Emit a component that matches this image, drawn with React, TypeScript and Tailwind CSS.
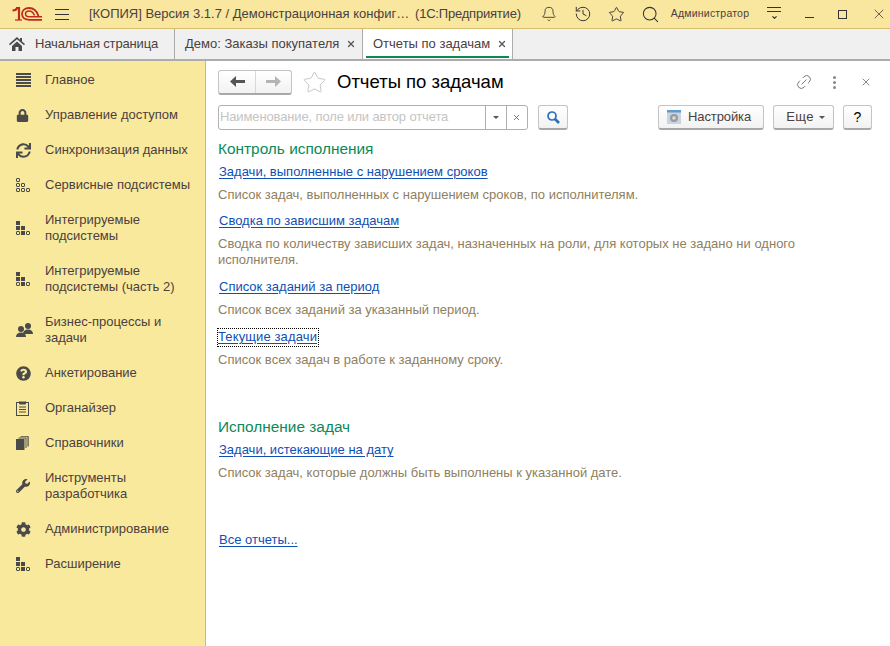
import type { ReactNode } from "react";
import { Bell, ChevronDown, History, Link2, Search, Star, X } from "lucide-react";
import { FaLock, FaQuestionCircle, FaWrench, FaCog, FaSync } from "react-icons/fa";

const Logo = () => (
  <svg width="30" height="14" viewBox="0 0 30 14" fill="none" stroke="#bf2a1c">
    <path d="M0.500 3.500C2.500 3.500 4.500 3 5 1H7V13" strokeWidth="2.200" />
    <path d="M3 13H10" strokeWidth="1.200" />
    <path d="M30 12.800H17.500C13 12.800 10 10.500 10 7C10 3.500 13 1 17 1C21.500 1 25 4.500 26.500 9" strokeWidth="1.800" />
    <path d="M30 9.800H18C15.500 9.800 13.500 8.800 13.500 7C13.500 5.200 15.200 4 17.200 4C19.500 4 21.500 6 22.500 8.500" strokeWidth="1.500" />
  </svg>
);

const Home = () => (
  <svg width="16" height="14" viewBox="0 0 16 14" fill="#4a4a4a">
    <path d="M8 0 0 7l1 1.200L8 2.200l7 6L16 7l-3-2.600V1h-2v1.700z" />
    <path d="M3 9 8 4.500 13 9v5H9.500V10h-3v4H3z" />
  </svg>
);

// stepped grid of squares; "f" cells are solid, "o" cells are outlined
const Tiles = ({ pattern }: { pattern: string }) => {
  const cells = [
    [0, 0],
    [0, 5],
    [5, 5],
    [0, 10],
    [5, 10],
    [10, 10],
  ];
  return (
    <svg width="15" height="14" viewBox="0 0 15 14" fill="none">
      {cells.map(([x, y], i) =>
        pattern[i] === "f" ? (
          <rect key={i} x={x} y={y} width="4" height="4" fill="#4a4a4a" />
        ) : (
          <rect key={i} x={x + 0.5} y={y + 0.5} width="3" height="3" stroke="#4a4a4a" rx="0.5" />
        ),
      )}
    </svg>
  );
};

const Lines = () => (
  <svg width="15" height="14" viewBox="0 0 15 14" fill="#4a4a4a">
    <rect y="0" width="15" height="2" />
    <rect y="3" width="15" height="2" />
    <rect y="6" width="15" height="2" />
    <rect y="9" width="15" height="2" />
    <rect y="12" width="15" height="2" />
  </svg>
);

const People = () => (
  <svg width="17" height="14" viewBox="0 0 17 14" fill="#4a4a4a">
    <circle cx="12" cy="3" r="3" />
    <path d="M7 11c0-3 2-4.500 5-4.500s5 1.500 5 4.500z" />
    <circle cx="5" cy="6" r="3" />
    <path d="M0 14c0-3 2-4.500 5-4.500s5 1.500 5 4.500z" />
  </svg>
);

const Clipboard = () => (
  <svg width="13" height="15" viewBox="0 0 13 15" fill="none" stroke="#4a4a4a">
    <rect x="0.500" y="1.500" width="12" height="13" />
    <path d="M3.500 0.500v2.500h6v-2.500" fill="#4a4a4a" />
    <path d="M3 6h7M3 8.500h7M3 11h7" />
  </svg>
);

const Pages = () => (
  <svg width="13" height="14" viewBox="0 0 13 14" fill="#4a4a4a">
    <rect x="0" y="3" width="8.500" height="11" />
    <path d="M9.500 2h1v10h-1zM2.500 1.500h8v1h-8zM11.500 0.500h1.200v10h-1.200zM4.500 0h8v0.800h-8z" />
  </svg>
);

const navItems: { label: ReactNode; icon: ReactNode }[] = [
  { label: "Главное", icon: <Lines /> },
  { label: "Управление доступом", icon: <FaLock size={13} color="#4a4a4a" /> },
  { label: "Синхронизация данных", icon: <FaSync size={15} color="#4a4a4a" /> },
  { label: "Сервисные подсистемы", icon: <Tiles pattern="oooooo" /> },
  { label: <>Интегрируемые<br />подсистемы</>, icon: <Tiles pattern="fffofo" /> },
  { label: <>Интегрируемые<br />подсистемы (часть 2)</>, icon: <Tiles pattern="fffofo" /> },
  { label: <>Бизнес-процессы и<br />задачи</>, icon: <People /> },
  { label: "Анкетирование", icon: <FaQuestionCircle size={15} color="#4a4a4a" /> },
  { label: "Органайзер", icon: <Clipboard /> },
  { label: "Справочники", icon: <Pages /> },
  { label: <>Инструменты<br />разработчика</>, icon: <FaWrench size={14} color="#4a4a4a" /> },
  { label: "Администрирование", icon: <FaCog size={15} color="#4a4a4a" /> },
  { label: "Расширение", icon: <Tiles pattern="fffofo" /> },
];

const Report = ({ title, focused, children, className }: { title: string; focused?: boolean; children: ReactNode; className?: string }) => (
  <div className={className}>
    <div className={"h-4 leading-4 " + (focused ? "" : "pl-px")}>
      {focused ? (
        <a className="inline-block h-[17px] w-[100px] text-[#0f4fb4] underline underline-offset-2 outline-1 outline-dotted outline-black tracking-[0.12px]">{title}</a>
      ) : (
        <a className="text-[#0f4fb4] underline underline-offset-2">{title}</a>
      )}
    </div>
    <p className="mt-[7px] leading-4 text-[#8f8060]">{children}</p>
  </div>
);

const Btn = ({ children, className }: { children: ReactNode; className?: string }) => (
  <div className={"h-[25px] flex items-center justify-center rounded-[3px] border border-[#c4c4c4] border-b-2 border-b-[#a8a8a8] bg-gradient-to-b from-white to-[#f2f2f2] " + className}>
    {children}
  </div>
);

export default function App() {
  return (
    <div className="w-[890px] h-[646px] overflow-hidden flex flex-col bg-white text-[13px] font-['Liberation_Sans',Arial,sans-serif] text-[#4b4040]">
      {/* title bar */}
      <div className="h-[29px] shrink-0 flex items-center bg-[#f9e79f] border-b border-[#d5bf6c]">
        <div className="ml-3 w-[43px] flex"><Logo /></div>
        <div className="w-[14px] flex flex-col gap-[4px]">
          <span className="h-px bg-[#333]" />
          <span className="h-px bg-[#333]" />
          <span className="h-px bg-[#333]" />
        </div>
        <span className="ml-[20px] w-[326px] whitespace-nowrap">[КОПИЯ] Версия 3.1.7 / Демонстрационная конфиг…</span>
        <span className="whitespace-nowrap tracking-[-0.2px]">(1С:Предприятие)</span>
        <Bell size={16} strokeWidth={1.3} className="ml-[20px] text-[#333]" />
        <History size={18} strokeWidth={1.3} className="ml-[17px] text-[#333]" />
        <Star size={17} strokeWidth={1.3} className="ml-[16px] text-[#333]" />
        <Search size={19} strokeWidth={1.3} className="ml-[16px] text-[#333]" />
        <span className="ml-[11px] text-[10.5px] tracking-[0.2px] whitespace-nowrap">Администратор</span>
        <div className="ml-[18px] w-[14px] flex flex-col items-center gap-[3px]">
          <span className="h-px w-full bg-[#333]" />
          <span className="h-px w-full bg-[#333]" />
          <ChevronDown size={7} strokeWidth={4} className="-mt-px text-[#333]" />
        </div>
        <span className="ml-[24px] mt-[7px] w-[9px] h-px bg-[#333]" />
        <span className="ml-[24px] w-[9px] h-[9px] border border-[#333]" />
        <X size={16} strokeWidth={1.1} className="ml-[24px] text-[#333]" />
      </div>

      {/* tabs */}
      <div className="h-[32px] shrink-0 flex bg-[#f0f0f0] border-b-2 border-[#acacac]">
        <div className="w-[175px] flex items-center border-r border-[#acacac]">
          <div className="ml-[9px] flex"><Home /></div>
          <span className="ml-[10px] tracking-[-0.15px]">Начальная страница</span>
        </div>
        <div className="w-[188px] flex items-center border-r border-[#acacac]">
          <span className="ml-[10px]">Демо: Заказы покупателя</span>
          <X size={10} strokeWidth={3} className="ml-[7px] text-[#555]" />
        </div>
        <div className="relative w-[150px] flex items-center bg-white border-r border-[#acacac]">
          <span className="ml-[10px]">Отчеты по задачам</span>
          <X size={10} strokeWidth={3} className="ml-[7px] text-[#555]" />
          <span className="absolute left-[3px] right-[3px] bottom-[1px] h-[2px] bg-[#0d8a50]" />
        </div>
      </div>

      <div className="flex-1 flex min-h-0">
        {/* sidebar */}
        <div className="w-[206px] shrink-0 bg-[#f9e99c] border-r border-[#c4bb85] pt-px">
          {navItems.map((item, i) => (
            <div key={i} className="flex items-center pt-[10px] pb-[9px] leading-4">
              <div className="w-[45px] pl-[16px] flex shrink-0">{item.icon}</div>
              <span>{item.label}</span>
            </div>
          ))}
        </div>

        {/* content */}
        <div className="flex-1 min-w-0 pl-3 pr-[18px] pt-[9px]">
          <div className="h-[24px] flex items-center">
            <Btn className="w-[74px] !justify-start">
              <div className="w-[37px] h-full flex items-center justify-center border-r border-[#d8d8d8]">
                <svg width="15" height="11" viewBox="0 0 15 11" fill="#555"><path d="M0 5.500 6 0v4h9v3H6v4z" /></svg>
              </div>
              <div className="flex-1 flex items-center justify-center">
                <svg width="15" height="11" viewBox="0 0 15 11" fill="#b4b4b4"><path d="M15 5.500 9 0v4H0v3h9v4z" /></svg>
              </div>
            </Btn>
            <Star size={25} strokeWidth={0.8} className="ml-[10px] text-[#bcbcbc]" />
            <h1 className="ml-[10px] text-[18.5px] font-normal text-black">Отчеты по задачам</h1>
            <Link2 size={18} strokeWidth={1.1} className="ml-auto text-[#666] -rotate-45" />
            <div className="ml-[20px] mr-[2px] flex flex-col gap-[2px]">
              <span className="w-[3px] h-[3px] rounded-full bg-[#888]" />
              <span className="w-[3px] h-[3px] rounded-full bg-[#888]" />
              <span className="w-[3px] h-[3px] rounded-full bg-[#888]" />
            </div>
            <X size={12} strokeWidth={1.4} className="ml-[22px] text-[#555]" />
          </div>

          <div className="mt-[11px] h-[25px] flex items-stretch">
            <div className="w-[310px] flex rounded-[3px] border border-[#b0b0b0]">
              <span className="flex-1 pl-[1px] leading-[22px] text-[#c4c4c4] tracking-[-0.13px]">Наименование, поле или автор отчета</span>
              <div className="w-[21px] border-l border-[#b0b0b0] flex items-center justify-center">
                <span className="w-0 h-0 border-x-[3px] border-x-transparent border-t-[3px] border-t-[#555]" />
              </div>
              <div className="w-[21px] border-l border-[#b0b0b0] flex items-center justify-center">
                <X size={9} strokeWidth={2} className="text-[#555] -ml-px" />
              </div>
            </div>
            <Btn className="ml-[10px] w-[30px]">
              <svg width="13" height="13" viewBox="0 0 13 13" fill="none" stroke="#2a6fb8">
                <circle cx="5" cy="5" r="4" strokeWidth="1.700" />
                <path d="M8 8l4 4" strokeWidth="2.600" />
              </svg>
            </Btn>
            <Btn className="ml-auto w-[106px] !justify-start pl-[8px]">
              <svg width="14" height="14" viewBox="0 0 14 14">
                <rect width="14" height="14" fill="#c9d4de" />
                <rect width="14" height="2.500" fill="#5f9ad0" />
                <circle cx="7" cy="8" r="4" fill="#9a9a9a" />
                <circle cx="7" cy="8" r="1.800" fill="#dcdcdc" />
              </svg>
              <span className="ml-[7px] tracking-[-0.1px]">Настройка</span>
            </Btn>
            <Btn className="ml-[9px] w-[61px]">
              <span className="ml-[4px] tracking-[0.3px]">Еще</span>
              <span className="ml-[5px] w-0 h-0 border-x-[3px] border-x-transparent border-t-[3px] border-t-[#555]" />
            </Btn>
            <Btn className="ml-[9px] w-[29px]"><span className="text-[14px] text-black">?</span></Btn>
          </div>

          <h2 className="mt-[9px] text-[15.4px] leading-5 font-normal text-[#0a8a5a]">Контроль исполнения</h2>
          <Report className="mt-[5px]" title="Задачи, выполненные с нарушением сроков">
            Список задач, выполненных с нарушением сроков, по исполнителям.
          </Report>
          <Report className="mt-[10px]" title="Сводка по зависшим задачам">
            Сводка по количеству зависших задач, назначенных на роли, для которых не задано ни одного исполнителя.
          </Report>
          <Report className="mt-[11px]" title="Список заданий за период">
            Список всех заданий за указанный период.
          </Report>
          <Report className="mt-[11px]" title="Текущие задачи" focused>
            Список всех задач в работе к заданному сроку.
          </Report>

          <h2 className="mt-[49px] text-[15.4px] leading-5 font-normal text-[#0a8a5a]">Исполнение задач</h2>
          <Report className="mt-[5px]" title="Задачи, истекающие на дату">
            Список задач, которые должны быть выполнены к указанной дате.
          </Report>

          <div className="mt-[51px] h-4 leading-4 pl-px">
            <a className="text-[#0f4fb4] underline underline-offset-2">Все отчеты...</a>
          </div>
        </div>
      </div>
    </div>
  );
}
